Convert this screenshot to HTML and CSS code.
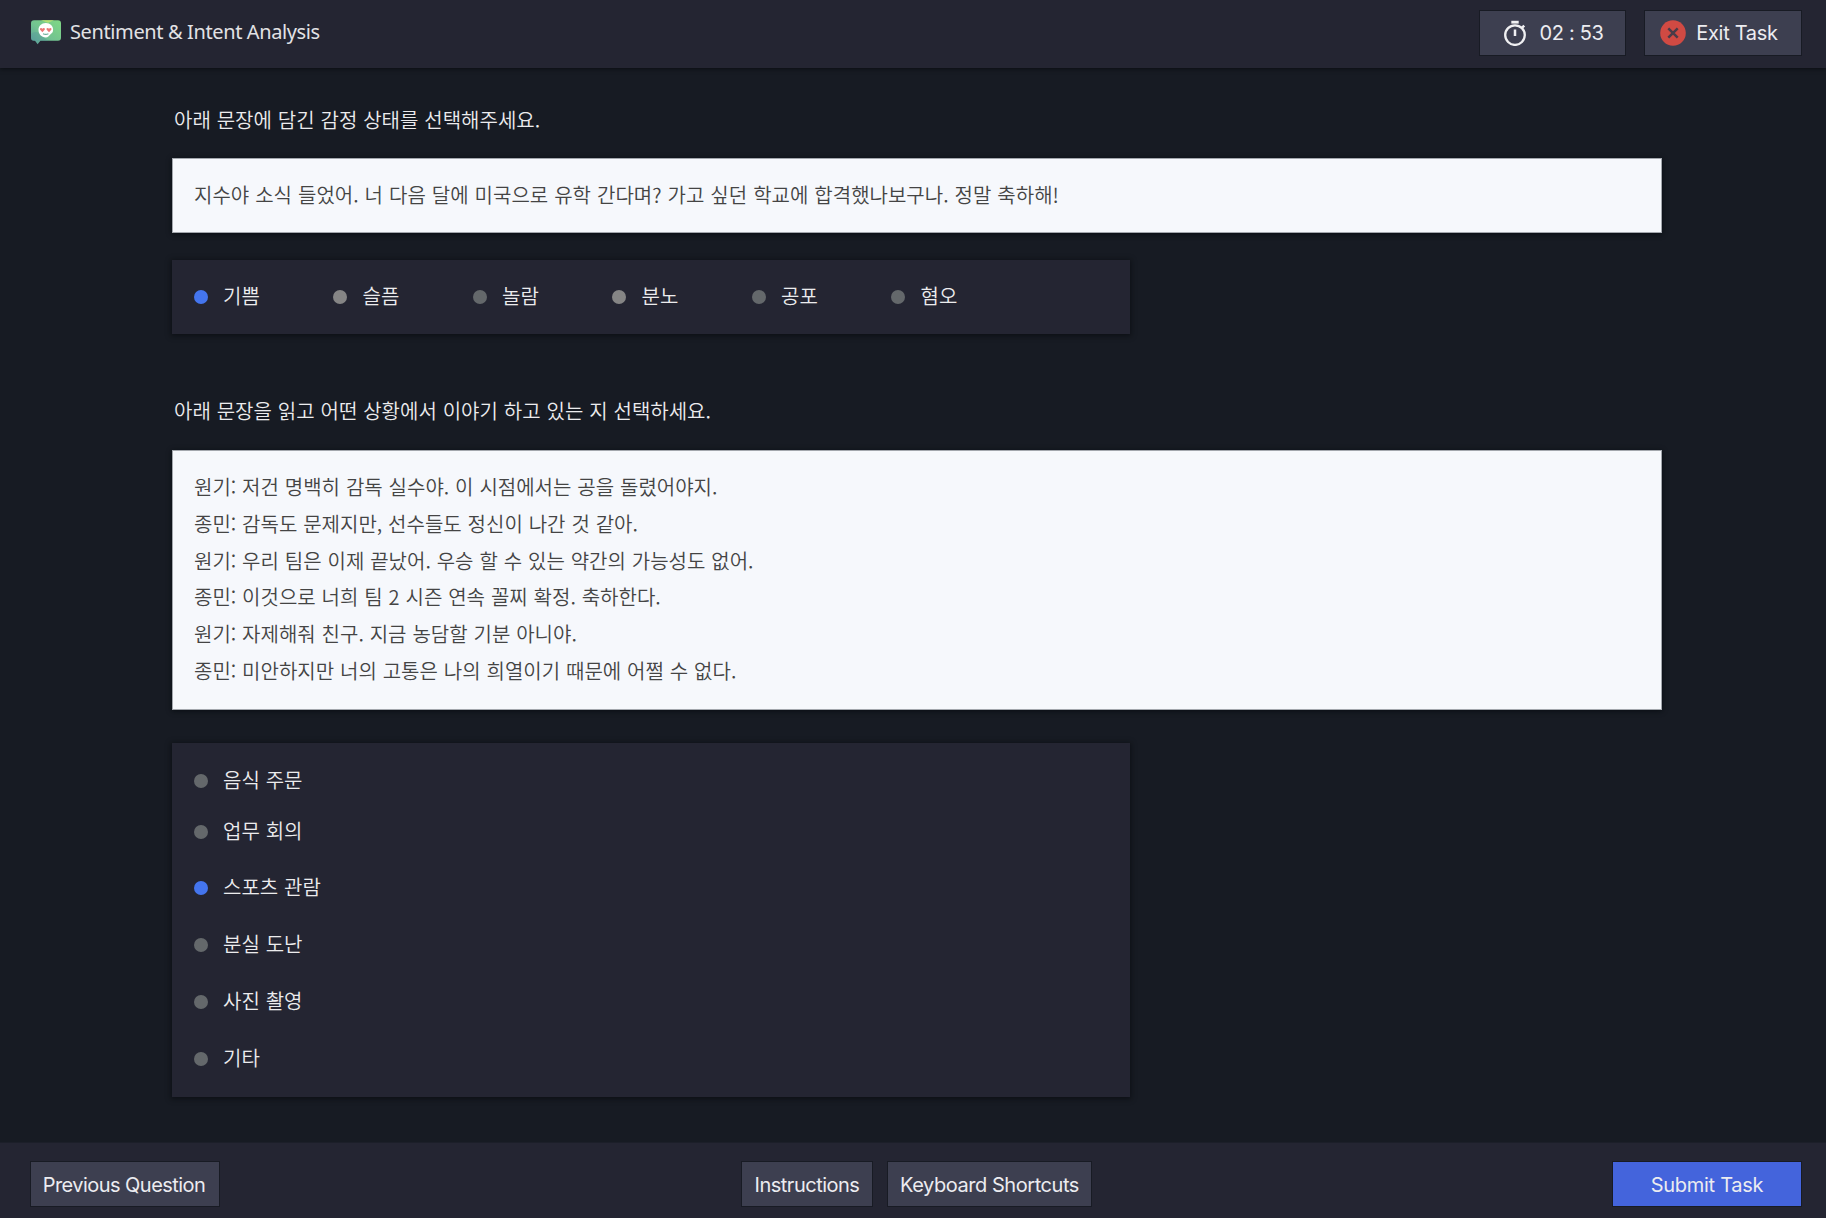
FILE: index.html
```html
<!DOCTYPE html>
<html lang="ko">
<head>
<meta charset="utf-8">
<title>Sentiment &amp; Intent Analysis</title>
<link rel="stylesheet" href="styles.css">
</head>
<body>
<header class="topbar">
  <div class="brand">
    <svg class="logo" width="30" height="25" viewBox="0 0 30 25" aria-hidden="true">
      <defs>
        <linearGradient id="bubble" x1="1" y1="0" x2="0" y2="1">
          <stop offset="0" stop-color="#80d884"/>
          <stop offset=".55" stop-color="#72c391"/>
          <stop offset="1" stop-color="#579a9b"/>
        </linearGradient>
      </defs>
      <path d="M3 .2h24a3 3 0 0 1 3 3v14.600a3 3 0 0 1-3 3H9.400L6.600 24.200 4 20.800H3a3 3 0 0 1-3-3V3.200a3 3 0 0 1 3-3z" fill="url(#bubble)"/>
      <path d="M10 .2h13l-6 2.600z" fill="#b5df75"/>
      <path d="M0 14q5-4 9 0t8 6.800H3a3 3 0 0 1-3-3z" fill="#579a9b" opacity=".4"/>
      <path d="M14.800 3.100c4.500 0 7.300 3 7.300 6.700 0 2.500-1.300 3.600-2.800 4.700-1.400 1.200-2.300 3-4.500 3-4.500 0-7.300-3.500-7.300-7.400 0-4 3-7 7.300-7z" fill="#fff"/>
      <path d="M11.400 12.200l-2.300-2.400c-1-1.800 1.400-2.500 2.300-1 .9-1.500 3.300-.8 2.300 1zM18 12.200l-2.300-2.400c-1-1.800 1.400-2.500 2.300-1 .9-1.500 3.300-.8 2.300 1z" fill="#ec7777"/>
      <path d="M12 13.800q2.800 1.200 5.400 0" fill="none" stroke="#6cae9a" stroke-width="1.200"/>
    </svg>
    <h1 class="title">Sentiment &amp; Intent Analysis</h1>
  </div>
  <div class="actions">
    <div class="btn timer">
      <svg width="24" height="26" viewBox="0 0 24 26" aria-hidden="true">
        <g fill="none" stroke="#f0f0f2">
          <circle cx="12" cy="15.100" r="9.800" stroke-width="2.300"/>
          <path d="M8.300 2.200h7.400" stroke-width="2.800"/>
          <path d="M12 9.400v6.600M18.400 8.400l2.800-2.800" stroke-width="2.500"/>
        </g>
      </svg>
      <span class="time">02 : 53</span>
    </div>
    <button class="btn exit">
      <svg width="26" height="26" viewBox="0 0 26 26" aria-hidden="true">
        <circle cx="13" cy="13" r="12.800" fill="#d04a43"/>
        <path d="M8.300 8.300l9.400 9.400M17.700 8.300l-9.400 9.400" stroke="#4a3b48" stroke-width="2.500"/>
      </svg>
      <span>Exit Task</span>
    </button>
  </div>
</header>
<main class="content">
  <section class="question first">
    <h2 class="prompt">아래 문장에 담긴 감정 상태를 선택해주세요.</h2>
    <div class="passage"><p>지수야 소식 들었어. 너 다음 달에 미국으로 유학 간다며? 가고 싶던 학교에 합격했나보구나. 정말 축하해!</p></div>
    <ul class="options row">
      <li class="selected">기쁨</li><li class="light">슬픔</li><li>놀람</li><li class="light">분노</li><li>공포</li><li>혐오</li>
    </ul>
  </section>
  <section class="question second">
    <h2 class="prompt">아래 문장을 읽고 어떤 상황에서 이야기 하고 있는 지 선택하세요.</h2>
    <div class="passage dialogue">
      <p>원기: 저건 명백히 감독 실수야. 이 시점에서는 공을 돌렸어야지.</p>
      <p>종민: 감독도 문제지만, 선수들도 정신이 나간 것 같아.</p>
      <p>원기: 우리 팀은 이제 끝났어. 우승 할 수 있는 약간의 가능성도 없어.</p>
      <p>종민: 이것으로 너희 팀 2 시즌 연속 꼴찌 확정. 축하한다.</p>
      <p>원기: 자제해줘 친구. 지금 농담할 기분 아니야.</p>
      <p>종민: 미안하지만 너의 고통은 나의 희열이기 때문에 어쩔 수 없다.</p>
    </div>
    <ul class="options column">
      <li>음식 주문</li><li>업무 회의</li><li class="selected">스포츠 관람</li><li>분실 도난</li><li>사진 촬영</li><li>기타</li>
    </ul>
  </section>
</main>
<footer class="bottombar">
  <div class="side"><button class="btn previous">Previous Question</button></div>
  <div class="center"><button class="btn instructions">Instructions</button><button class="btn shortcuts">Keyboard Shortcuts</button></div>
  <div class="side end"><button class="btn submit">Submit Task</button></div>
</footer>
</body>
</html>
```
FILE: styles.css
```css
* { box-sizing: border-box; }
body {
  margin: 0;
  height: 1218px;
  display: flex;
  flex-direction: column;
  overflow: hidden;
  background: #171b23;
  color: #ececee;
  font-family: "Noto Sans CJK KR", sans-serif;
  font-size: 20px;
  word-spacing: .3px;
}
h1, h2, p, ul { margin: 0; padding: 0; font-weight: 350; font-size: 20px; white-space: nowrap; }
.topbar {
  height: 68px;
  flex: none;
  display: flex;
  justify-content: space-between;
  padding: 10px 24px 0 31px;
  background: #242532;
  box-shadow: 0 1px 4px rgba(5, 8, 12, .7);
}
.brand { display: flex; align-items: flex-start; gap: 9px; }
.logo { margin-top: 10px; }
.title {
  font-family: "Noto Sans", sans-serif;
  font-weight: 400;
  line-height: 44px;
  letter-spacing: -.38px;
  word-spacing: 0;
  color: #e2e2e5;
}
.actions { display: flex; gap: 18px; }
.btn {
  height: 46px;
  display: flex;
  align-items: center;
  justify-content: center;
  padding: 0;
  border: 1px solid #181b24;
  border-radius: 0;
  background: #3d3f50;
  color: #ececf0;
  font: 400 20px/24px Inter, sans-serif;
  letter-spacing: -.3px;
  word-spacing: 0;
  white-space: nowrap;
}
.timer { width: 147px; gap: 12px; padding-left: 2px; }
.exit { width: 158px; gap: 10px; padding-right: 8px; }
.content { flex: 1; padding-left: 172px; }
.prompt { padding-left: 2px; line-height: 30px; }
.first { padding-top: 37px; }
.passage {
  width: 1490px;
  margin-top: 24px;
  padding: 18px 21px;
  background: #f6f8fc;
  color: #444;
  border: 1px solid #a3a7ad;
  box-shadow: 0 1px 5px rgba(5, 10, 14, .8);
}
.passage p { line-height: 36px; }
.first .passage { height: 75px; margin-top: 23px; word-spacing: .4px; }
.dialogue { height: 260px; }
.dialogue p { line-height: 36.8px; }
.options {
  width: 958px;
  list-style: none;
  background: #242532;
  box-shadow: 0 1px 5px 1px rgba(8, 12, 16, .7);
}
.options li { display: flex; align-items: center; gap: 15.400px; line-height: 30px; }
.options li::before {
  content: "";
  width: 14px;
  height: 14px;
  margin-top: 2px;
  border-radius: 50%;
  background: #64686b;
}
.options li.light::before { background: #858585; }
.options li.selected::before { background: #4475ee; }
.row { display: flex; height: 74px; margin-top: 27px; padding: 0 0 2px 21.600px; }
.row li { width: 139.500px; }
.second { padding-top: 62px; }
.column { height: 354px; margin-top: 33px; padding: 22px 21.600px 0; }
.column li { height: 30px; margin-bottom: 26.800px; }
.column li:first-child { margin-bottom: 20.700px; }
.bottombar {
  height: 76px;
  flex: none;
  display: grid;
  grid-template-columns: 1fr auto 1fr;
  padding: 18px 24px 0 30px;
  background: #242532;
  border-top: 1px solid #1c1f29;
}
.bottombar .btn { padding-top: 2px; }
.center { display: flex; gap: 14px; padding-left: 1px; }
.end { display: flex; justify-content: flex-end; }
.previous { width: 190px; padding-right: 2px; letter-spacing: -.54px; }
.instructions { width: 132px; letter-spacing: -.5px; }
.shortcuts { width: 205px; letter-spacing: -.45px; }
.submit { width: 190px; background: #4464dc; }
```
